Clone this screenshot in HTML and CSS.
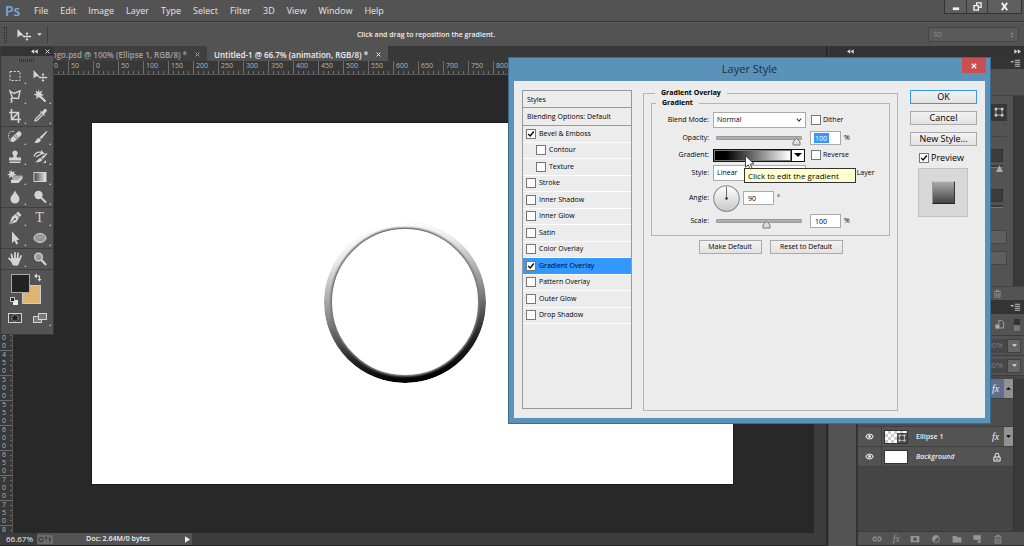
FILE: index.html
```html
<!DOCTYPE html>
<html lang="en">
<head>
<meta charset="utf-8">
<title>Untitled-1 @ 66.7% (animation, RGB/8)</title>
<link rel="stylesheet" href="styles.css">
</head>
<body>
<svg class="defs" aria-hidden="true">
  <symbol id="i-movetool" viewBox="0 0 16 16"><path fill="currentColor" d="M1.500 2v8.500l2.300-2 4 .200z"/><path stroke="currentColor" stroke-width="1" fill="none" d="M11 6v7M7.500 9.500h7"/><path fill="currentColor" d="M11 5l1.500 2h-3zM11 14l1.500-2h-3zM6.500 9.500l2-1.500v3zM15.500 9.500l-2-1.500v3z"/></symbol>
  <symbol id="i-marquee" viewBox="0 0 16 16"><rect x="3" y="3.500" width="10" height="9" fill="none" stroke="currentColor" stroke-dasharray="2.200 1.400"/></symbol>
  <symbol id="i-lasso" viewBox="0 0 16 16"><path fill="none" stroke="currentColor" stroke-width="1.400" d="M3 3l4 2.500L13 3l-1.500 7.500-6-.500zM5.500 10l-1.500 1 1 2.500-1.500 1"/></symbol>
  <symbol id="i-wand" viewBox="0 0 16 16"><path stroke="currentColor" stroke-width="2.200" d="M7 7l6.500 6.500"/><path fill="currentColor" d="M6.500 1l1 3 3-1.500-1.500 3L12 7l-3 1 .500 3L7 9l-3 2 .700-3.300L1.500 6.500l3-1L3.500 2.500 6 4z"/></symbol>
  <symbol id="i-crop" viewBox="0 0 16 16"><path fill="none" stroke="currentColor" stroke-width="1.600" d="M4.500 1v10.500H14M2 4.500h9.500V15M4.500 11.500l7-7"/></symbol>
  <symbol id="i-dropper" viewBox="0 0 16 16"><path fill="none" stroke="currentColor" stroke-width="1.200" d="M9 5.500L3.500 11 3 13l2-.500L10.500 7"/><path fill="currentColor" d="M8 4l1-1 1 1 2-2.500a1.500 1.500 0 0 1 2.500 2L12 6l1 1-1 1z"/></symbol>
  <symbol id="i-heal" viewBox="0 0 16 16"><path stroke="currentColor" stroke-width="5" stroke-linecap="round" d="M6 10.500L12 5"/><path stroke="#777" stroke-width="1" d="M7 7l4 4M8.500 5.700l3.500 4"/><path fill="none" stroke="currentColor" stroke-dasharray="1.500 1" d="M7 2.500c-4-1-6 2-5.500 5S3 12 4 13"/></symbol>
  <symbol id="i-brush" viewBox="0 0 16 16"><path fill="currentColor" d="M14.500 2l1 .5L9.500 10 7.500 8.500zM7 9l2 1.800c-.5 2.700-3.500 3.700-7 2.700 2-.5 2-4 5-4.500z"/></symbol>
  <symbol id="i-stamp" viewBox="0 0 16 16"><path fill="currentColor" d="M8 1.500a2.700 2.700 0 0 1 2 4.500c-.8 1-.8 2 .5 2.500H14v3H2v-3h3.500C6.800 8 6.800 7 6 6a2.700 2.700 0 0 1 2-4.500zM2.500 12.500h11V14h-11z"/></symbol>
  <symbol id="i-history" viewBox="0 0 16 16"><path fill="currentColor" d="M14.500 4l1 .5-4.500 5.500-2-1.500zM8.500 9l2 1.500c-1 2.500-4 3.200-7.500 2.500 2.500-.5 3-3.500 5.500-4z"/><path fill="none" stroke="currentColor" stroke-width="1.300" d="M2 7.500C3 3 8 2 11 4.500M4 8l5-3"/><path fill="currentColor" d="M9 1l4 4-4.500.500zM14 11v3h-3z"/></symbol>
  <symbol id="i-eraser" viewBox="0 0 16 16"><path fill="#aaa" d="M4 13.500v-2l4-5h7.500l-4 5z"/><path fill="currentColor" d="M4 11h7l4.500-4.500V9.500L11.500 14H4z"/><path fill="currentColor" d="M4.500 .5l.8 2.700L8 2.200 7 4.500l2.500 1.500L6.500 6.700l.3 3L4.300 7.500 2 9.200l.6-2.700L0 5.500 3 4.500 1.700 2l2.300.8z"/></symbol>
  <linearGradient id="g-tool"><stop stop-color="#444"/><stop offset="1" stop-color="#eee"/></linearGradient>
  <symbol id="i-gradient" viewBox="0 0 16 16"><rect x="2" y="3.500" width="12" height="9" fill="url(#g-tool)" stroke="currentColor"/></symbol>
  <symbol id="i-drop" viewBox="0 0 16 16"><path fill="currentColor" d="M8 1.500c1 3 4.500 5.500 4.500 8.500a4.500 4.500 0 0 1-9 0c0-3 3.500-5.500 4.500-8.500z"/></symbol>
  <symbol id="i-dodge" viewBox="0 0 16 16"><circle cx="6.500" cy="6" r="4.200" fill="currentColor"/><path stroke="currentColor" stroke-width="1.800" d="M9 8.500l5 5"/></symbol>
  <symbol id="i-pen" viewBox="0 0 16 16"><path fill="currentColor" d="M11 1.500l3.500 3.500-2 2L9 3.500zM8.500 4L12 7.500 9.500 12 2 14.500 5 7z"/><path stroke="#555" d="M2.500 14l5.500-5"/><circle cx="8" cy="9" r="1" fill="#555"/></symbol>
  <symbol id="i-arrow" viewBox="0 0 16 16"><path fill="currentColor" d="M5 1.500V13l2.500-2.300 1.700 3.800 2-1L9.500 10l3-.2z"/></symbol>
  <symbol id="i-ellipse" viewBox="0 0 16 16"><ellipse cx="8" cy="8" rx="6" ry="4.500" fill="#999" stroke="currentColor"/></symbol>
  <symbol id="i-hand" viewBox="0 0 16 16"><path fill="none" stroke="currentColor" stroke-width="1.800" stroke-linecap="round" d="M5.500 8L4.500 3.500M8 7V2M10.500 7.500l.5-5M12.500 9L14 5M5 10L2 7.500"/><path fill="currentColor" d="M4.500 7H13l-.5 4-1.500 3.500H6L4 10.500z"/></symbol>
  <symbol id="i-zoom" viewBox="0 0 16 16"><circle cx="6.500" cy="6" r="3.800" fill="#999" stroke="currentColor" stroke-width="1.300"/><path stroke="currentColor" stroke-width="2.200" d="M9.500 9l4.500 5"/></symbol>
  <symbol id="i-mask" viewBox="0 0 16 16"><rect x="1.500" y="3.500" width="13" height="9" fill="#444" stroke="currentColor"/><circle cx="8" cy="8" r="3.200" fill="#222" stroke="currentColor" stroke-dasharray="1 .8"/></symbol>
  <symbol id="i-screen" viewBox="0 0 16 16"><rect x="1.500" y="6.500" width="8" height="6" fill="#777" stroke="currentColor"/><rect x="6.500" y="3.500" width="8" height="6" fill="#777" stroke="currentColor"/></symbol>
  <symbol id="i-eye" viewBox="0 0 16 16"><path fill="none" stroke="currentColor" stroke-width="1.800" d="M1.500 8c3-6 10-6 13 0-3 6-10 6-13 0z"/><circle cx="8" cy="8" r="2.500" fill="currentColor"/></symbol>
  <symbol id="i-lock" viewBox="0 0 16 16"><path fill="none" stroke="currentColor" stroke-width="1.600" d="M5 8V5a3 3 0 0 1 6 0v3M3 8h10v6.500H3z"/><path stroke="currentColor" stroke-width="1.600" d="M6 11.500h4"/></symbol>
  <symbol id="i-trash" viewBox="0 0 16 16"><path fill="none" stroke="currentColor" stroke-width="1.500" d="M2 4.500h12M6 4V2h4v2M3.500 6v8.500h9V6M6.500 7v5.500M9.500 7v5.500"/></symbol>
  <symbol id="i-link" viewBox="0 0 16 16"><path fill="none" stroke="currentColor" stroke-width="1.800" d="M7 5H4.500a3 3 0 0 0 0 6H7M9 5h2.500a3 3 0 0 1 0 6H9M5 8h6"/></symbol>
  <symbol id="i-addmask" viewBox="0 0 16 16"><path fill="currentColor" fill-rule="evenodd" d="M1 3h14v10H1zM8 5a3 3 0 1 0 0 6 3 3 0 0 0 0-6z"/></symbol>
  <symbol id="i-adjust" viewBox="0 0 16 16"><circle cx="8" cy="8" r="5.500" fill="none" stroke="currentColor" stroke-width="1.500"/><path fill="currentColor" d="M12 4L4 12a5.500 5.500 0 0 1 8-8z"/></symbol>
  <symbol id="i-folder" viewBox="0 0 16 16"><path fill="currentColor" d="M1 3h6l1.500 2H15v8.500H1z"/></symbol>
  <symbol id="i-new" viewBox="0 0 16 16"><path fill="currentColor" fill-rule="evenodd" d="M2 2h12v12H9V9H2zM10.500 9v3.500L13 9z"/></symbol>
  <symbol id="i-shape" viewBox="0 0 16 16"><path fill="none" stroke="currentColor" stroke-width="1.200" d="M3 3h10v10H3z"/><path fill="currentColor" d="M1 1h4v4H1zM11 1h4v4h-4zM1 11h4v4H1zM11 11h4v4h-4z"/></symbol>
  <symbol id="i-menu" viewBox="0 0 16 12"><path fill="currentColor" d="M0 3h6L3 6zM7 1h8v1.500H7zM7 4h8v1.500H7zM7 7h8v1.500H7zM7 10h8v1.500H7z"/></symbol>
  <symbol id="i-left" viewBox="0 0 12 8"><path fill="currentColor" d="M5.500 0v8L0 4zM11.500 0v8L6 4z"/></symbol>
  <symbol id="i-right" viewBox="0 0 12 8"><path fill="currentColor" d="M.5 0v8L6 4zM6.500 0v8L12 4z"/></symbol>
  <symbol id="i-x" viewBox="0 0 8 8"><path stroke="currentColor" stroke-width="1.600" d="M1 1l6 6M7 1L1 7"/></symbol>
  <symbol id="i-down" viewBox="0 0 8 8"><path fill="currentColor" d="M0 2h8L4 6z"/></symbol>
</svg>

<div class="app">
  <header class="menubar">
    <span class="logo">Ps</span>
    <nav class="menus">
      <button>File</button><button>Edit</button><button>Image</button><button>Layer</button><button>Type</button><button>Select</button><button>Filter</button><button>3D</button><button>View</button><button>Window</button><button>Help</button>
    </nav>
    <div class="winbtns">
      <button aria-label="Minimize"><svg viewBox="0 0 10 10"><path fill="currentColor" d="M2 6h7v3H2z"/></svg></button>
      <button aria-label="Restore"><svg viewBox="0 0 10 10"><path fill="none" stroke="currentColor" stroke-width="1.500" d="M4 4V1h5v5H6M1 4h5v5H1z"/></svg></button>
      <button class="wide" aria-label="Close"><svg viewBox="0 0 10 10"><path stroke="currentColor" stroke-width="2" d="M2 1l6 8M8 1L2 9"/></svg></button>
    </div>
  </header>

  <div class="options">
    <span class="grip"></span>
    <svg class="ic"><use href="#i-movetool"/></svg>
    <svg class="caret"><use href="#i-down"/></svg>
    <span class="optsep"></span>
    <span class="hint">Click and drag to reposition the gradient.</span>
    <button class="mode"><span>3D</span><svg viewBox="0 0 6 8"><path fill="currentColor" d="M3 0l2.500 3h-5zM3 8l2.500-3h-5z"/></svg></button>
  </div>

  <main class="main">
    <section class="docs">
      <div class="tabs">
        <div class="tab first"><span>logo.psd @ 100% (Ellipse 1, RGB/8) *</span><svg class="x"><use href="#i-x"/></svg></div>
        <div class="tab active"><span>Untitled-1 @ 66.7% (animation, RGB/8) *</span><svg class="x"><use href="#i-x"/></svg></div>
      </div>
      <div class="hruler" id="hruler"></div>
      <div class="view">
        <div class="vruler" id="vruler"></div>
        <div class="canvas">
          <div class="artboard">
            <svg class="ring" viewBox="0 0 170 170">
              <defs>
                <linearGradient id="r1" x1=".38" y1="0" x2=".58" y2="1"><stop offset="0" stop-color="#fff"/><stop offset=".16" stop-color="#ececec"/><stop offset=".5" stop-color="#8c8c8c"/><stop offset=".8" stop-color="#262626"/><stop offset="1" stop-color="#000"/></linearGradient>
                <linearGradient id="r2" x1=".35" y1="0" x2=".65" y2="1"><stop offset="0" stop-color="#3c3c3c"/><stop offset=".4" stop-color="#666"/><stop offset=".72" stop-color="#888"/><stop offset="1" stop-color="#aaa"/></linearGradient>
                <filter id="soft"><feGaussianBlur stdDeviation=".8"/></filter>
                <mask id="band"><circle cx="85" cy="85" r="77" fill="none" stroke="#fff" stroke-width="8"/></mask>
              </defs>
              <g mask="url(#band)">
                <circle cx="85" cy="85" r="77" fill="none" stroke="url(#r1)" stroke-width="8"/>
                <circle cx="85" cy="85" r="72.500" fill="none" stroke="url(#r2)" stroke-width="3.500" filter="url(#soft)"/>
              </g>
            </svg>
          </div>
        </div>
        <div class="vscroll"></div>
      </div>
      <footer class="status">
        <span class="pct">66.67%</span>
        <div class="info">
          <svg class="stic" viewBox="0 0 16 9"><rect width="16" height="9" fill="#6b6b6b"/><circle cx="4" cy="4.500" r="2.200" fill="none" stroke="#333"/><path fill="#333" d="M8 3l2-2v4zM14 4l-2-2v5z"/></svg>
          <span>Doc: 2.64M/0 bytes</span>
          <svg class="play" viewBox="0 0 6 8"><path fill="#eee" d="M0 0l6 4-6 4z"/></svg>
        </div>
      </footer>
    </section>

    <aside class="dock">
      <div class="dockhead"><svg class="arr"><use href="#i-left"/></svg><svg class="arr"><use href="#i-right"/></svg></div>
      <div class="dockbody">
        <div class="strip"></div>
        <div class="panels">
          <div class="ptab"><svg class="pm"><use href="#i-menu"/></svg></div>
          <div class="props">
            <div class="ptop"></div>
            <div class="pinner">
              <div class="pcol">
                <div class="pshape"><span class="shapebtn"><svg class="ic"><use href="#i-shape"/></svg></span></div>
                <div class="pset"><span class="pfield"></span><span class="ptrack"><i></i></span></div>
                <div class="pset"><span class="pfield"></span><span class="ptrack"></span></div>
                <div class="pbtns"><span></span><span></span></div>
              </div>
              <div class="gutter"></div>
            </div>
            <div class="pfoot"><svg class="sm"><use href="#i-trash"/></svg></div>
          </div>
          <div class="ptab"><svg class="pm"><use href="#i-menu"/></svg></div>
          <div class="filterrow"><svg class="ic" viewBox="0 0 16 16"><path fill="none" stroke="currentColor" stroke-width="1.300" d="M7 8V2h4l3 3v8H8"/><path fill="currentColor" d="M2 8h6v6H2z"/></svg><span class="toggle"></span></div>
          <div class="valrow"><span>100%</span><b><svg class="dn"><use href="#i-down"/></svg></b></div>
          <div class="valrow"><span>100%</span><b><svg class="dn"><use href="#i-down"/></svg></b></div>
          <div class="layers">
            <div class="llist">
              <div class="layer sel"><span class="eye"></span><span class="lname"></span><em>fx</em><span class="lhandle"><svg viewBox="0 0 8 8"><path d="M0 6h8L4 2z"/></svg></span></div>
              <div class="layer fxs"></div>
              <div class="layer"><span class="eye"><svg><use href="#i-eye"/></svg></span><span class="thumb check"><svg><use href="#i-shape"/></svg></span><span class="lname">Ellipse 1</span><em>fx</em><span class="lhandle"><svg viewBox="0 0 8 8"><path d="M0 2h8L4 6z"/></svg></span></div>
              <div class="layer"><span class="eye"><svg><use href="#i-eye"/></svg></span><span class="thumb"></span><span class="lname it">Background</span><svg class="lock"><use href="#i-lock"/></svg></div>
            </div>
            <div class="gutter"></div>
          </div>
          <div class="lfoot"><svg><use href="#i-link"/></svg><em>fx</em><svg><use href="#i-addmask"/></svg><svg><use href="#i-adjust"/></svg><svg><use href="#i-folder"/></svg><svg><use href="#i-new"/></svg><svg><use href="#i-trash"/></svg></div>
        </div>
      </div>
    </aside>
  </main>

  <div class="palette">
    <div class="phead"><svg class="arr"><use href="#i-left"/></svg><svg class="x"><use href="#i-x"/></svg></div>
    <div class="pgrip"></div>
    <div class="tools"><button class="t" aria-label="Marquee"><svg><use href="#i-marquee"/></svg></button><button aria-label="Move"><svg><use href="#i-movetool"/></svg></button><button class="t" aria-label="Lasso"><svg><use href="#i-lasso"/></svg></button><button class="t" aria-label="Magic wand"><svg><use href="#i-wand"/></svg></button><button class="t" aria-label="Crop"><svg><use href="#i-crop"/></svg></button><button class="t" aria-label="Eyedropper"><svg><use href="#i-dropper"/></svg></button></div>
    <div class="tools"><button class="t" aria-label="Healing"><svg><use href="#i-heal"/></svg></button><button class="t" aria-label="Brush"><svg><use href="#i-brush"/></svg></button><button class="t" aria-label="Stamp"><svg><use href="#i-stamp"/></svg></button><button class="t" aria-label="History brush"><svg><use href="#i-history"/></svg></button><button class="t" aria-label="Eraser"><svg><use href="#i-eraser"/></svg></button><button class="t" aria-label="Gradient"><svg><use href="#i-gradient"/></svg></button><button class="t" aria-label="Blur"><svg><use href="#i-drop"/></svg></button><button class="t" aria-label="Dodge"><svg><use href="#i-dodge"/></svg></button></div>
    <div class="tools"><button class="t" aria-label="Pen"><svg><use href="#i-pen"/></svg></button><button class="t type" aria-label="Text">T</button><button class="t" aria-label="Path selection"><svg><use href="#i-arrow"/></svg></button><button class="t" aria-label="Ellipse"><svg><use href="#i-ellipse"/></svg></button></div>
    <div class="tools"><button class="t" aria-label="Hand"><svg><use href="#i-hand"/></svg></button><button aria-label="Zoom"><svg><use href="#i-zoom"/></svg></button></div>
    <svg class="swatches" viewBox="0 0 52 38"><rect x="21.500" y="15.500" width="18" height="18" fill="#deb471" stroke="#ccc"/><rect x="10.500" y="4.500" width="18" height="18" fill="#222" stroke="#aaa"/><path fill="none" stroke="#ddd" stroke-width="1.200" d="M35 6h3.500v4"/><path fill="#ddd" d="M33 6l3-2.500v5zM38.500 11.500L36.500 9h4z"/><path fill="#eee" d="M12 30h5v5h-5z"/><path fill="#222" stroke="#ccc" d="M9.500 27.500h4v4h-4z"/></svg>
    <div class="tools last"><button aria-label="Quick mask"><svg><use href="#i-mask"/></svg></button><button class="t" aria-label="Screen mode"><svg><use href="#i-screen"/></svg></button></div>
  </div>

  <div class="dialog" role="dialog" aria-labelledby="dlg-title">
    <div class="dtitle"><h1 id="dlg-title">Layer Style</h1><button class="dclose" aria-label="Close"><svg><use href="#i-x"/></svg></button></div>
    <div class="dbody">
      <div class="stylelist">
        <div class="shead">Styles</div>
        <div class="shead">Blending Options: Default</div>
        <div class="srows">
          <label><input type="checkbox" checked>Bevel &amp; Emboss</label>
          <label class="sub"><input type="checkbox">Contour</label>
          <label class="sub"><input type="checkbox">Texture</label>
          <label><input type="checkbox">Stroke</label>
          <label><input type="checkbox">Inner Shadow</label>
          <label><input type="checkbox">Inner Glow</label>
          <label><input type="checkbox">Satin</label>
          <label><input type="checkbox">Color Overlay</label>
          <label class="on"><input type="checkbox" checked>Gradient Overlay</label>
          <label><input type="checkbox">Pattern Overlay</label>
          <label><input type="checkbox">Outer Glow</label>
          <label><input type="checkbox">Drop Shadow</label>
        </div>
      </div>

      <fieldset class="outer">
        <legend>Gradient Overlay</legend>
        <fieldset class="inner">
          <legend>Gradient</legend>
          <div class="form">
            <label for="blend">Blend Mode:</label>
            <select id="blend"><option>Normal</option></select>
            <label class="ck"><input type="checkbox">Dither</label>

            <label for="op">Opacity:</label>
            <input id="op" type="range" min="0" max="100" value="100">
            <span class="unit"><input class="num selected" value="100" aria-label="Opacity value">%</span>

            <label for="gr">Gradient:</label>
            <div class="gradwrap">
              <button id="gr" class="grad" aria-label="Gradient"></button><button class="graddrop" aria-label="Gradient presets"><svg><use href="#i-down"/></svg></button>
              <svg class="cursor" viewBox="0 0 10 15"><path fill="#fff" stroke="#222" stroke-width=".8" d="M.5.800v11.500l2.700-2.500 1.800 4.200 2-.9-1.800-4 3.800-.2z"/></svg>
              <div class="tip" role="tooltip">Click to edit the gradient</div>
            </div>
            <label class="ck"><input type="checkbox">Reverse</label>

            <label for="st">Style:</label>
            <select id="st"><option>Linear</option></select>
            <label class="ck"><input type="checkbox" checked>Align with Layer</label>

            <label for="an">Angle:</label>
            <span class="anglewrap"><svg class="dial" viewBox="0 0 26 26"><defs><linearGradient id="dg" x1="0" y1="0" x2="0" y2="1"><stop stop-color="#fff"/><stop offset="1" stop-color="#c8c8c8"/></linearGradient></defs><circle cx="13" cy="13" r="12.300" fill="url(#dg)" stroke="#888"/><path stroke="#555" stroke-width=".8" d="M13 1.500V13"/><circle cx="13" cy="13" r="1.300" fill="#333"/></svg><input id="an" class="num" value="90">°</span>
            <span></span>

            <label for="sc">Scale:</label>
            <input id="sc" type="range" min="0" max="160" value="97">
            <span class="unit"><input class="num" value="100" aria-label="Scale value">%</span>
          </div>
        </fieldset>
        <div class="defaults"><button class="btn">Make Default</button><button class="btn">Reset to Default</button></div>
      </fieldset>

      <div class="actions">
        <button class="btn big primary">OK</button>
        <button class="btn big">Cancel</button>
        <button class="btn big">New Style...</button>
        <label class="prev"><input type="checkbox" checked>Preview</label>
        <div class="pvbox"><span></span></div>
      </div>
    </div>
  </div>
</div>
<script src="rulers.js"></script>
</body>
</html>
```
FILE: styles.css
```css
* { box-sizing: border-box; }
body {
  margin: 0;
  height: 100vh;
  overflow: hidden;
  background: #282828;
  color: #ddd;
  font: 7px/10px "Open Sans", "Noto Sans", sans-serif;
}
button, input, select { font: inherit; color: inherit; margin: 0; padding: 0; border: 0; background: none; }
svg { display: block; flex: none; }
.defs { position: absolute; width: 0; height: 0; }
.app { position: relative; height: 100%; display: flex; flex-direction: column; }
.ic { width: 16px; height: 16px; }
.x { width: 5px; height: 5px; }
.arr { width: 7px; height: 5px; }

/* menu bar */
.menubar { display: flex; align-items: center; height: 22px; background: #535353; border-bottom: 1px solid #333; flex: none; }
.logo { width: 28px; padding-left: 5px; color: #7aa7dc; font-weight: 600; font-size: 14px; line-height: 20px; }
.menus { display: flex; flex: 1; }
.menus button { padding: 0 6px; font-size: 9px; line-height: 14px; color: #e6e6e6; }
.winbtns { display: flex; align-self: flex-start; height: 14px; margin-right: 2px; border: 1px solid #333; border-top: 0; background: #5e5e5e; color: #f2f2f2; }
.winbtns button { width: 21px; display: flex; align-items: center; justify-content: center; }
.winbtns button + button { border-left: 1px solid #3a3a3a; }
.winbtns .wide { width: 34px; }
.winbtns svg { width: 9px; height: 9px; }

/* options bar */
.options { display: flex; align-items: center; height: 24px; background: #535353; border-top: 1px solid #606060; flex: none; }
.grip { width: 3px; height: 16px; margin: 0 9px 0 4px; border-left: 1px dotted #2c2c2c; border-right: 1px dotted #2c2c2c; }
.caret { width: 5px; height: 5px; margin: 0 5px; }
.optsep { width: 1px; height: 18px; background: #404040; margin-right: auto; }
.hint { font-weight: 600; color: #f0f0f0; }
.mode { display: flex; align-items: center; justify-content: space-between; width: 91px; height: 15px; margin: 0 5px 0 auto; padding: 0 4px; border: 1px solid #444; background: #5a5a5a; color: #8c8c8c; border-radius: 1px; }
.mode svg { width: 4px; height: 6px; }
.optsep + .hint { margin-left: -124px; }

/* document */
.main { display: flex; flex: 1; min-height: 0; }
.docs { flex: 1; min-width: 0; display: flex; flex-direction: column; border-right: 2px solid #282828; }
.tabs { display: flex; height: 15px; background: #383838; flex: none; }
.tab { display: flex; align-items: center; gap: 8px; padding: 2px 7px 0; background: #3f3f3f; color: #a2a2a2; font-weight: 600; font-size: 8px; }
.tab.first { width: 207px; justify-content: flex-end; }
.tab.active { background: #535353; color: #eee; }
.hruler { display: flex; height: 14px; overflow: hidden; background: #383838; border-bottom: 1px solid #555; color: #b4b4b4; flex: none; }
.hruler span { flex: 0 0 25px; height: 14px; padding-left: 2px; border-left: 1px solid #6c6c6c; line-height: 9px; background: repeating-linear-gradient(90deg, #6c6c6c 0 1px, transparent 1px 5px) 4px 10px / 20px 4px no-repeat; }
.hruler span:first-child { margin-left: -7px; }
.view { display: flex; flex: 1; min-height: 0; }
.vruler { width: 13px; overflow: hidden; background: #383838; border-right: 1px solid #555; color: #b4b4b4; }
.vruler span { display: flex; flex-direction: column; align-items: center; height: 25px; padding-right: 4px; border-top: 1px solid #6c6c6c; line-height: 8px; background: repeating-linear-gradient(#6c6c6c 0 1px, transparent 1px 5px) 10px 4px / 3px 20px no-repeat; }
.canvas { flex: 1; min-width: 0; overflow: hidden; padding: 48px 79px 0; background: #282828; }
.artboard { width: 641px; height: 361px; padding: 94px 0 0 228px; background: #fff; box-shadow: 0 0 0 1px #1c1c1c; }
.ring { width: 170px; height: 170px; }
.vscroll { width: 12px; background: #3c3c3c; }
.status { display: flex; align-items: center; height: 13px; background: #3c3c3c; border-bottom: 1px solid #222; color: #f0f0f0; flex: none; }
.pct { width: 37px; padding-left: 6px; font-size: 8px; }
.info { display: flex; align-items: center; width: 155px; height: 12px; background: #535353; font-weight: 600; }
.stic { width: 16px; height: 9px; margin-right: 33px; }
.play { width: 5px; height: 7px; margin: 0 2px 0 auto; }

/* dock */
.dock { width: 196px; display: flex; flex-direction: column; background: #535353; border-left: 1px solid #454545; }
.dockhead { display: flex; justify-content: space-between; align-items: center; height: 11px; padding: 0 3px 0 18px; background: #333; color: #d8d8d8; flex: none; }
.dockbody { display: flex; flex: 1; min-height: 0; }
.strip { width: 29px; border-right: 2px solid #333; }
.panels { flex: 1; display: flex; flex-direction: column; min-width: 0; }
.ptab { display: flex; justify-content: flex-end; align-items: center; height: 12px; padding-right: 3px; background: #343434; color: #bbb; flex: none; }
.props + .ptab { height: 14px; }
.pm { width: 11px; height: 8px; }
.props { display: flex; flex-direction: column; }
.ptop { height: 27px; border-bottom: 1px solid #444; }
.pinner { display: flex; }
.gutter { width: 11px; background: #3a3a3a; border-left: 1px solid #333; flex: none; }
.pcol { flex: 1; height: 190px; padding-right: 6px; }
.pshape { display: flex; justify-content: flex-end; height: 41px; padding-top: 8px; border-bottom: 1px solid #444; }
.shapebtn { width: 16px; height: 17px; padding: 3px; background: #373737; color: #ccc; }
.shapebtn svg { width: 10px; height: 10px; }
.pset { height: 40px; display: flex; flex-direction: column; align-items: flex-end; gap: 3px; padding: 12px 4px 0 0; }
.pfield { width: 60px; height: 13px; background: #3c3c3c; border: 1px solid #333; flex: none; }
.ptrack { display: flex; justify-content: flex-end; width: 60px; height: 3px; background: #3a3a3a; border-bottom: 1px solid #777; }
.ptrack i { width: 7px; height: 7px; background: #aaa; clip-path: polygon(50% 0, 100% 100%, 0 100%); flex: none; }
.pbtns { display: grid; gap: 7px; justify-content: end; padding-top: 13px; }
.pbtns span { width: 60px; height: 14px; background: #5f5f5f; border: 1px solid #444; }
.pfoot { display: flex; align-items: center; justify-content: flex-end; height: 14px; padding-right: 22px; border-top: 1px solid #444; color: #999; }
.sm { width: 9px; height: 9px; }
.filterrow { display: flex; align-items: center; justify-content: flex-end; gap: 9px; height: 22px; padding-right: 4px; color: #ababab; border-bottom: 1px solid #3c3c3c; flex: none; }
.filterrow .ic { width: 11px; height: 11px; }
.toggle { width: 6px; height: 12px; background: linear-gradient(#333 50%, #777 50%); }
.valrow { display: flex; justify-content: flex-end; align-items: center; height: 20px; padding-right: 3px; border-bottom: 1px solid #3c3c3c; color: #7d7d7d; flex: none; }
.valrow span { height: 14px; padding: 1px 4px; background: #474747; font-size: 8px; }
.valrow b { display: flex; align-items: center; justify-content: center; width: 14px; height: 14px; background: #666; border: 1px solid #404040; color: #ddd; }
.dn { width: 5px; height: 5px; }
.layers { display: flex; flex: 1; min-height: 0; border-top: 3px solid #484848; }
.llist { flex: 1; background: #454545; }
.layer { display: flex; align-items: center; height: 20px; background: #535353; border-bottom: 1px solid #404040; color: #eee; }
.layer.sel { height: 20px; background: #5f6f8b; }
.layer.fxs { height: 28px; background: #4d4d4d; }
.eye { display: flex; align-items: center; justify-content: center; width: 24px; height: 100%; border-right: 1px solid #404040; }
.eye svg { width: 9px; height: 9px; }
.thumb { display: flex; align-items: flex-end; justify-content: flex-end; width: 24px; height: 14px; margin: 0 8px 0 2px; background: #fff; border: 1px solid #333; }
.thumb.check { background: repeating-conic-gradient(#ccc 0 25%, #fff 0 50%) 0 0 / 6px 6px; }
.thumb svg { width: 10px; height: 10px; padding: 1px; background: #484848; color: #ccc; }
.lname { flex: 1; font-weight: 600; }
.lname.it { font-style: italic; }
.layer em { width: 12px; font: italic 10px/12px "Liberation Serif", serif; }
.lhandle { display: flex; align-items: center; justify-content: center; width: 9px; height: 100%; background: #929292; }
.lhandle svg { width: 5px; height: 5px; }
.lock { width: 10px; height: 10px; margin-right: 11px; }
.lfoot { display: flex; align-items: center; justify-content: space-between; height: 15px; padding: 0 21px 0 14px; border-top: 1px solid #3a3a3a; border-bottom: 1px solid #2c2c2c; color: #969696; flex: none; }
.lfoot svg { width: 10px; height: 10px; }
.lfoot em { font: italic 10px/12px "Liberation Serif", serif; }

/* floating tool palette */
.palette { position: absolute; left: 0; top: 46px; width: 54px; padding-bottom: 6px; background: #535353; border: 1px solid #3a3a3a; }
.phead { display: flex; justify-content: flex-end; align-items: center; gap: 7px; height: 9px; padding-right: 3px; background: #343434; color: #ddd; }
.pgrip { width: 16px; height: 3px; margin: 3px auto 4px; background: repeating-linear-gradient(90deg, #333 0 1px, transparent 1px 2px); }
.tools { display: grid; grid-template-columns: 25px 25px; padding-left: 1px; border-bottom: 1px solid #3e3e3e; }
.tools.last { border: 0; }
.tools button { position: relative; display: flex; align-items: center; justify-content: center; height: 20px; color: #d4d4d4; }
.tools svg { width: 16px; height: 16px; }
.tools .t::after { content: ""; position: absolute; right: 1px; bottom: 2px; border: 1px solid; border-color: transparent #bbb #bbb transparent; }
.tools .type { font: 14px/16px "Liberation Serif", serif; }
.swatches { width: 52px; height: 38px; }

/* layer style dialog */
.dialog { position: absolute; left: 508px; top: 57px; width: 483px; height: 367px; display: flex; flex-direction: column; padding: 0 6px 6px; background: #5a92ba; box-shadow: 0 0 0 1px #3e6b8c inset; color: #000; }
.dtitle { display: flex; align-items: center; justify-content: center; height: 24px; position: relative; flex: none; }
.dtitle h1 { margin: 0; font-size: 11px; line-height: 16px; font-weight: 400; color: #20303c; }
.dclose { position: absolute; right: -1px; top: 1px; width: 24px; height: 15px; display: flex; align-items: center; justify-content: center; background: #c94f50; color: #fff; }
.dclose svg { width: 6px; height: 6px; }
.dbody { display: flex; flex: 1; min-height: 0; padding: 9px 8px 9px 8px; background: #ececec; }
.dbody input[type="checkbox"] { appearance: none; width: 10px; height: 10px; background: #fff; border: 1px solid #777; flex: none; }
.dbody input[type="checkbox"]:checked { background: #fff url("data:image/svg+xml,%3Csvg xmlns='http://www.w3.org/2000/svg' viewBox='0 0 8 8'%3E%3Cpath fill='none' stroke='%23111' stroke-width='1.500' d='M1.200 4l2 2L6.800 1.500'/%3E%3C/svg%3E") center / 8px 8px no-repeat; }
.stylelist { width: 110px; display: flex; flex-direction: column; border: 1px solid #999; }
.shead { height: 17px; padding: 4px 4px 2px; border-bottom: 1px solid #999; }
.shead + .shead { height: 18px; }
.srows { display: grid; grid-auto-rows: 1fr; height: 198px; }
.srows label { display: flex; align-items: center; gap: 3px; padding-left: 3px; border-bottom: 1px solid #fff; }
.srows .sub { padding-left: 13px; }
.srows .on { background: #3399ff; }
fieldset { min-width: 0; margin: 0; padding: 0; border: 1px solid #b4b4b4; }
legend { font-weight: 700; font-size: 7px; line-height: 10px; }
.outer { flex: 1; align-self: stretch; margin: -2px 12px -2px 11px; padding: 0 7px; }
.outer > legend { margin-left: 4px; padding: 0 6px; }
.inner { height: 138px; }
.inner > legend { margin-left: 4px; padding: 0 6px; }
.form { display: grid; grid-template-columns: 57px 93px 70px; grid-template-rows: 18px 18px 16px 19px 32px 14px; align-items: center; column-gap: 4px; padding-top: 3px; }
.form > label:not(.ck) { text-align: right; }
.form select { appearance: none; width: 93px; height: 16px; padding-left: 3px; border: 1px solid #aaa; background: #fff url("data:image/svg+xml,%3Csvg xmlns='http://www.w3.org/2000/svg' viewBox='0 0 8 8'%3E%3Cpath fill='none' stroke='%23333' stroke-width='1.400' d='M1 2l3 3.500L7 2'/%3E%3C/svg%3E") right 3px center / 6px 6px no-repeat; }
.ck { display: flex; align-items: center; gap: 2px; padding-left: 1px; white-space: nowrap; }
.unit { display: flex; align-items: center; gap: 3px; }
.num { width: 31px; height: 14px; padding-left: 4px; border: 1px solid #aaa; background: #fff; }
.num.selected { color: #fff; background: #fff linear-gradient(#3399ff, #3399ff) 3px 1px / 15px 10px no-repeat; }
input[type="range"] { appearance: none; width: 92px; height: 14px; padding: 0 3px; }
input[type="range"]::-webkit-slider-runnable-track { height: 4px; background: #b0b0b0; border: 1px solid #999; border-radius: 1px; }
input[type="range"]::-webkit-slider-thumb { appearance: none; width: 9px; height: 9px; background: url("data:image/svg+xml,%3Csvg xmlns='http://www.w3.org/2000/svg' viewBox='0 0 9 9'%3E%3Cpath fill='%23ddd' stroke='%23777' d='M4.500 1L8 5v3H1V5z'/%3E%3C/svg%3E"); }
.gradwrap { position: relative; display: flex; width: 92px; height: 13px; border: 1px solid #111; }
.grad { flex: 1; border: 1px solid #777; background: linear-gradient(90deg, #000 15%, #fff); }
.graddrop { display: flex; align-items: center; justify-content: center; width: 13px; background: #fff; border-left: 1px solid #111; color: #000; }
.graddrop svg { width: 8px; height: 8px; }
.cursor { position: absolute; left: 31px; top: 5px; width: 10px; height: 15px; z-index: 3; }
.tip { position: absolute; left: 30px; top: 18px; width: 112px; height: 15px; padding: 1px 3px; background: #ffffcf; border: 1px solid #333; font-size: 8px; line-height: 11px; white-space: nowrap; z-index: 2; }
.anglewrap { display: flex; align-items: center; gap: 3px; }
.dial { width: 27px; height: 27px; }
.defaults { display: flex; justify-content: center; gap: 8px; margin-top: 4px; }
.btn { height: 14px; border: 1px solid #aaa; background: linear-gradient(#f2f2f2, #e2e2e2); white-space: nowrap; }
.defaults .btn { width: 63px; }
.defaults .btn + .btn { width: 73px; }
.actions { width: 67px; display: flex; flex-direction: column; gap: 7px; }
.btn.big { font-size: 9px; line-height: 12px; }
.btn.primary { border-color: #3399ff; }
.prev { display: flex; align-items: center; gap: 2px; padding-left: 9px; font-size: 9px; }
.pvbox { display: flex; align-items: center; justify-content: center; width: 50px; height: 49px; margin: -2px 8px 0; background: #d8d8d8; border: 1px solid #c0c0c0; }
.pvbox span { width: 23px; height: 23px; background: linear-gradient(#aaa, #444); border: 1px solid; border-color: #ccc #333 #222 #999; }
```
FILE: rulers.js
```js
// Ruler labels, one cell for each 50 document pixels.
function fill(id, from, count, stacked) {
  const ruler = document.getElementById(id);
  for (let i = 0; i < count; i++) {
    const cell = document.createElement('span');
    const text = String(Math.abs(from + i * 50));
    if (stacked) {
      for (const d of text) {
        const b = document.createElement('div');
        b.textContent = d;
        cell.append(b);
      }
    } else {
      cell.textContent = text;
    }
    ruler.append(cell);
  }
}
fill('hruler', -200, 21, false);
fill('vruler', -100, 19, true);
```
